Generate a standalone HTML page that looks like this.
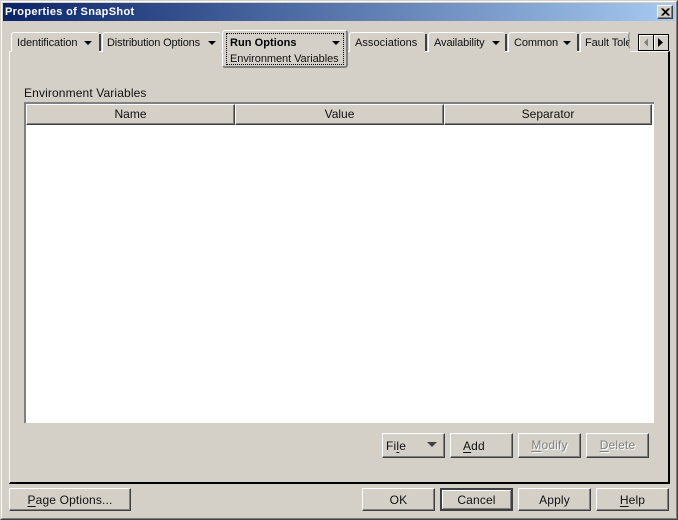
<!DOCTYPE html>
<html><head><meta charset="utf-8">
<style>
html,body{margin:0;padding:0;background:#d4d0c8;}
#w{position:relative;width:678px;height:520px;overflow:hidden;background:#d4d0c8;font:11px/13px "Liberation Sans",Arial,sans-serif;color:#000;}
#w div{position:absolute;box-sizing:border-box;}
.t{white-space:nowrap;}
.s{letter-spacing:-.1px;color:#111;}
.tab{top:32px;height:20px;border-top:1px solid #fff;border-left:1px solid #fff;border-top-left-radius:3px;border-top-right-radius:3px;background:#d4d0c8;}
.tabr{top:34px;width:2px;height:17px;background:#404040;}
.ar{width:0;height:0;border-left:4px solid transparent;border-right:4px solid transparent;border-top:4px solid #000;}
.btn{background:#d4d0c8;border:1px solid;border-color:#fff #404040 #404040 #fff;box-shadow:inset -1px -1px 0 #808080;text-align:center;font-size:12px;letter-spacing:.15px;color:#111;}
.hd{top:104px;height:21px;background:#d4d0c8;border:1px solid;border-color:#fff #404040 #404040 #fff;box-shadow:inset -1px -1px 0 #808080;text-align:center;line-height:19px;font-size:12px;color:#111;}
.dis{color:#808080;text-shadow:1px 1px 0 #fff;}
u{text-underline-offset:2px;}
</style></head><body>
<div id="w">
<!-- window frame -->
<div style="left:0;top:0;width:678px;height:520px;border:1px solid;border-color:#d4d0c8 #404040 #404040 #d4d0c8;"></div>
<div style="left:1px;top:1px;width:676px;height:518px;border:1px solid;border-color:#fff #808080 #808080 #fff;"></div>
<!-- title bar -->
<div style="left:3px;top:3px;width:672px;height:18px;background:linear-gradient(90deg,#0a246a,#a6caf0);"></div>
<div class="t" style="left:5px;top:6px;color:#fff;font-weight:bold;font-size:11px;letter-spacing:.33px;">Properties of SnapShot</div>
<div style="left:657px;top:5px;width:16px;height:14px;background:#d4d0c8;border:1px solid;border-color:#fff #404040 #404040 #fff;box-shadow:inset -1px -1px 0 #808080;">
<svg width="14" height="12" style="position:absolute;left:0;top:0"><path d="M3.5 2.5L10.5 9.5M4.5 2.5L11.5 9.5M10.5 2.5L3.5 9.5M11.5 2.5L4.5 9.5" stroke="#000" stroke-width="1" fill="none"/></svg></div>

<!-- panel -->
<div style="left:9px;top:51px;width:661px;height:433px;border:solid;border-width:1px 2px 2px 1px;border-color:#fff #000 #000 #fff;"></div>

<!-- tabs -->
<div class="tab" style="left:11px;width:88px;"></div>
<div class="tabr" style="left:99px;"></div>
<div class="t s" style="left:17px;top:37px;">Identification</div>
<div class="ar" style="left:84px;top:41px;"></div>

<div class="tab" style="left:102px;width:119px;"></div>
<div class="t s" style="left:107px;top:37px;letter-spacing:-.15px;">Distribution Options</div>
<div class="ar" style="left:208px;top:41px;"></div>

<div class="tab" style="left:349px;width:76px;"></div>
<div class="tabr" style="left:425px;"></div>
<div class="t s" style="left:355px;top:37px;letter-spacing:.05px;">Associations</div>

<div class="tab" style="left:428px;width:77px;"></div>
<div class="tabr" style="left:505px;"></div>
<div class="t s" style="left:434px;top:37px;">Availability</div>
<div class="ar" style="left:492px;top:41px;"></div>

<div class="tab" style="left:508px;width:69px;"></div>
<div class="tabr" style="left:577px;"></div>
<div class="t s" style="left:514px;top:37px;">Common</div>
<div class="ar" style="left:563px;top:41px;"></div>

<div class="tab" style="left:580px;width:50px;overflow:hidden;"></div>
<div class="t s" style="left:585px;top:37px;width:44px;overflow:hidden;">Fault Tolerance</div>
<svg width="6" height="20" style="position:absolute;left:626px;top:32px"><path d="M3.5 0.5L2.5 4.5L3.5 8.5L2.5 12.5L3.5 16.5" stroke="#808080" fill="none"/></svg>

<!-- active tab -->
<div style="left:222px;top:30px;width:126px;height:38px;background:#d4d0c8;border:solid;border-width:1px 2px 2px 1px;border-color:#fff #808080 #808080 #fff;border-radius:3px;"></div>
<div style="left:226px;top:33px;width:118px;height:32px;border:1px dotted #000;"></div>
<div class="t" style="left:230px;top:37px;font-weight:bold;letter-spacing:.05px;">Run Options</div>
<div class="ar" style="left:332px;top:41px;"></div>
<div class="t s" style="left:230px;top:53px;letter-spacing:-.06px;">Environment Variables</div>

<!-- scroll buttons -->
<div style="left:638px;top:34px;width:31px;height:17px;background:#000;"></div>
<div style="left:639px;top:35px;width:14px;height:15px;background:#d4d0c8;border-top:1px solid #fff;border-left:1px solid #fff;"></div>
<div style="left:654px;top:35px;width:14px;height:15px;background:#d4d0c8;border-top:1px solid #fff;border-left:1px solid #fff;"></div>
<svg width="31" height="17" style="position:absolute;left:638px;top:34px"><path d="M10 4.5V12.5L6 8.5Z" fill="#808080"/><path d="M20 4V13L25 8.5Z" fill="#000"/></svg>

<!-- label -->
<div class="t" style="left:24px;top:87px;font-size:12px;letter-spacing:.13px;color:#111;">Environment Variables</div>

<!-- table -->
<div style="left:24px;top:102px;width:630px;height:321px;background:#fff;border-top:2px solid #808080;border-left:2px solid #808080;"></div>
<div class="hd" style="left:26px;width:209px;">Name</div>
<div class="hd" style="left:235px;width:209px;">Value</div>
<div class="hd" style="left:444px;width:208px;">Separator</div>

<!-- action buttons -->
<div class="btn" style="left:382px;top:433px;width:63px;height:25px;"></div>
<div class="t" style="left:386px;top:440px;font-size:12px;letter-spacing:.2px;color:#111;">Fi<u>l</u>e</div>
<div style="left:427px;top:442px;width:0;height:0;border-left:5px solid transparent;border-right:5px solid transparent;border-top:5px solid #404040;"></div>
<div class="btn" style="left:450px;top:433px;width:63px;height:25px;line-height:24px;text-align:left;padding-left:12px;"><u>A</u>dd</div>
<div class="btn dis" style="left:518px;top:433px;width:63px;height:25px;line-height:23px;"><u>M</u>odify</div>
<div class="btn dis" style="left:586px;top:433px;width:63px;height:25px;line-height:23px;"><u>D</u>elete</div>

<!-- bottom buttons -->
<div class="btn" style="left:9px;top:488px;width:122px;height:23px;line-height:23px;"><u>P</u>age Options...</div>
<div class="btn" style="left:362px;top:488px;width:73px;height:23px;line-height:23px;">OK</div>
<div class="btn" style="left:440px;top:488px;width:73px;height:23px;border:2px solid #404040;box-shadow:inset 1px 1px 0 #fff,inset -1px -1px 0 #808080;line-height:21px;">Cancel</div>
<div class="btn" style="left:518px;top:488px;width:73px;height:23px;line-height:23px;">Apply</div>
<div class="btn" style="left:596px;top:488px;width:73px;height:23px;line-height:23px;"><u>H</u>elp</div>
</div>
</body></html>
